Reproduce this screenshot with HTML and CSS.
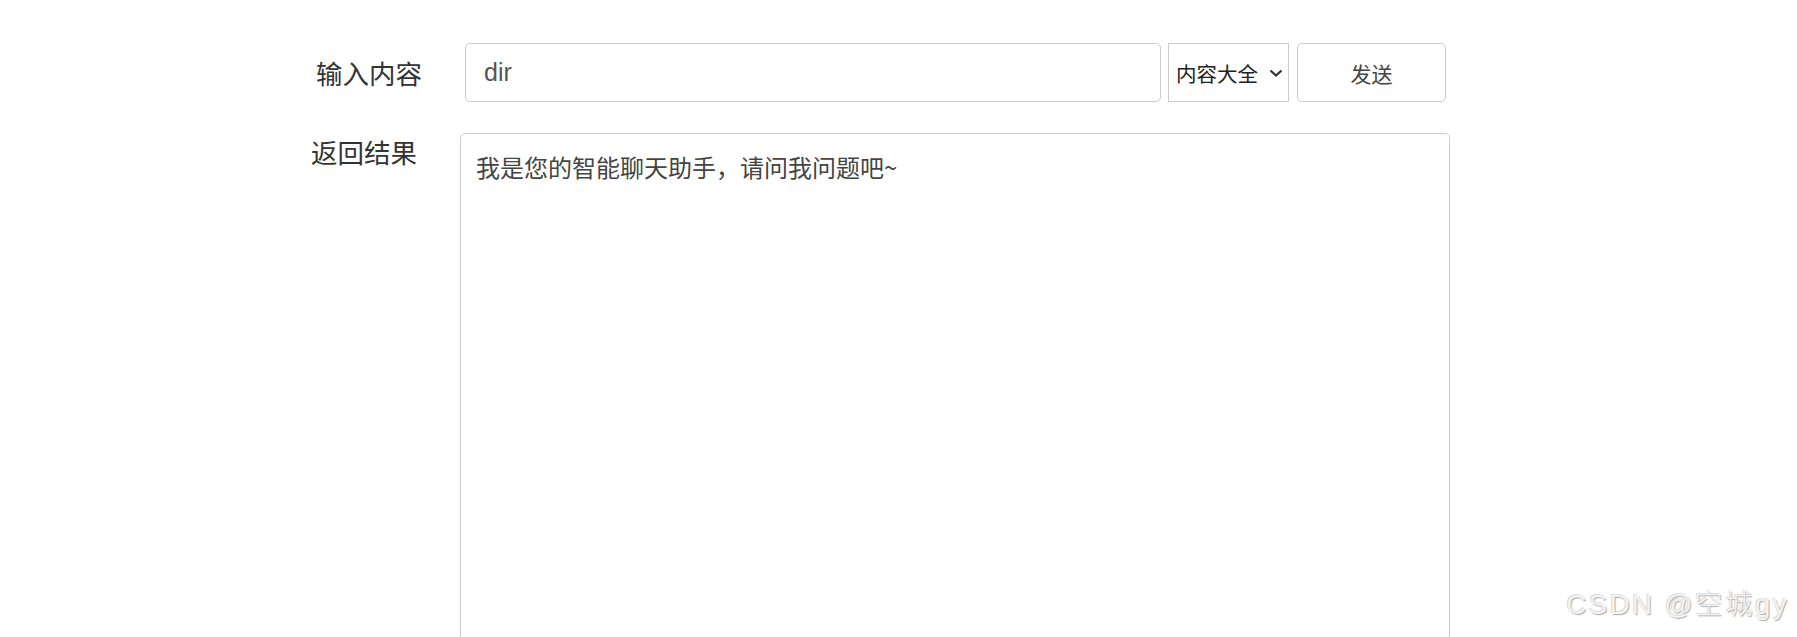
FILE: index.html
```html
<!DOCTYPE html>
<html lang="zh-CN">
<head>
  <meta charset="UTF-8">
  <meta name="viewport" content="width=device-width, initial-scale=1.0">
  <title>智能聊天助手</title>
  <link rel="stylesheet" href="styles.css">
</head>
<body>
  <div class="page">
    <div class="row row-input">
      <label class="row-label" for="content">输入内容</label>
      <input type="text" id="content" class="content-input" value="dir">
      <div class="select-wrap">
        <select id="type" class="type-select">
          <option value="all">内容大全</option>
        </select>
        <svg class="chevron" width="14" height="8" viewBox="0 0 14 8"><path d="M1.5 1.5 L7 6.5 L12.5 1.5" fill="none" stroke="#333" stroke-width="2.2"/></svg>
      </div>
      <button class="send-btn">发送</button>
    </div>

    <div class="row row-result">
      <label class="row-label" for="result">返回结果</label>
      <textarea id="result" class="result-area" readonly>我是您的智能聊天助手，请问我问题吧~</textarea>
    </div>
  </div>

  <div class="watermark">CSDN @空城gy</div>
</body>
</html>
```

FILE: styles.css
```css
html, body { margin: 0; height: 100%; overflow: hidden; background: #fff; }
body { font-family: "Noto Sans CJK SC", sans-serif; color: #333; position: relative; }
.page { padding: 43px 0 0 300px; }
.row { display: flex; }
.row-input { align-items: center; height: 59px; padding: 0 5px; }
.row-label { width: 117px; margin-right: 43px; text-align: right; font-size: 26.5px; line-height: 38px; color: #333; flex-shrink: 0; }
.content-input { box-sizing: border-box; width: 696px; height: 59px; border: 1px solid #ccc; border-radius: 5px; padding: 0 18px; font-family: "Liberation Sans", "Noto Sans CJK SC", sans-serif; font-size: 25px; color: #555; outline: none; }
.select-wrap { position: relative; margin-left: 7px; }
.type-select { box-sizing: border-box; width: 121px; height: 59px; border: 1px solid #ccc; border-radius: 0; background: #fff; padding: 0 0 0 7px; font-family: "Noto Sans CJK SC", sans-serif; font-size: 20.5px; color: #222; -webkit-appearance: none; appearance: none; outline: none; }
.chevron { position: absolute; left: 101px; top: 26px; pointer-events: none; }
.send-btn { box-sizing: border-box; width: 149px; height: 59px; margin-left: 8px; border: 1px solid #ccc; border-radius: 5px; background: #fff; font-family: "Noto Sans CJK SC", sans-serif; font-size: 21px; color: #444; }
.row-result { margin-top: 31px; align-items: flex-start; }
.result-area { box-sizing: border-box; width: 990px; height: 560px; border: 1px solid #ccc; border-radius: 5px; padding: 16px 15px; font-family: "Noto Sans CJK SC", serif; font-size: 24px; line-height: 34px; color: #444; resize: none; outline: none; }
.watermark { position: absolute; right: 8px; bottom: 15px; font-family: "Liberation Sans", "Noto Sans CJK SC", sans-serif; font-size: 27.5px; font-weight: 300; letter-spacing: 2.5px; color: #f4f4f4; text-shadow: 1px 1px 1px #aaa, -1px -1px 0 #ddd; }
```
